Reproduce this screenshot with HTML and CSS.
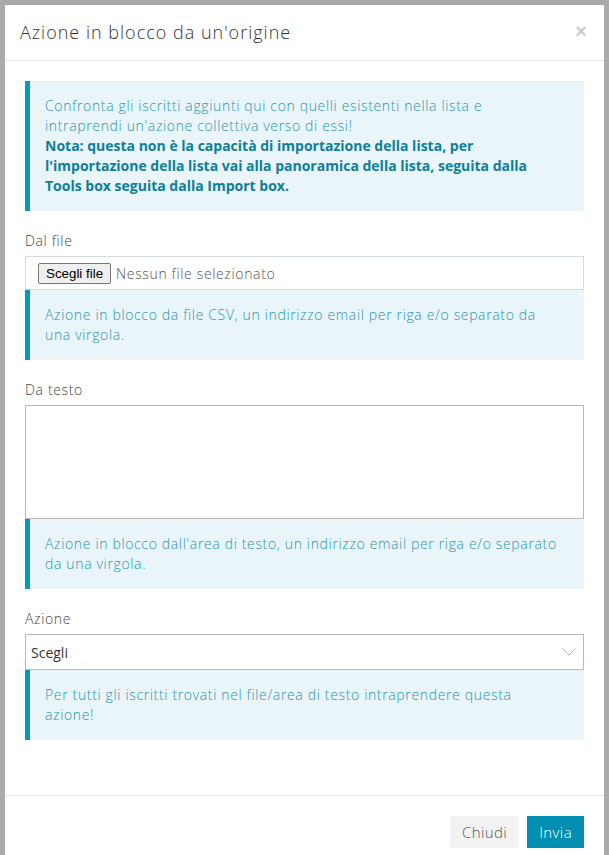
FILE: index.html
```html
<!DOCTYPE html>
<html lang="it">
<head>
    <meta charset="UTF-8">
    <meta name="viewport" content="width=device-width, initial-scale=1.0">
    <title>Azione in blocco da un'origine</title>
    <link rel="stylesheet" href="styles.css">
</head>
<body>
    <div class="modal">
        <div class="modal-header">
            <h4 class="modal-title">Azione in blocco da un'origine</h4>
            <button type="button" class="close">&times;</button>
        </div>

        <div class="modal-body">
            <div class="alert">
                Confronta gli iscritti aggiunti qui con quelli esistenti nella lista e intraprendi un'azione collettiva verso di essi!
                <strong>Nota: questa non è la capacità di importazione della lista, per l'importazione della lista vai alla panoramica della lista, seguita dalla Tools box seguita dalla Import box.</strong>
            </div>

            <div class="form-group">
                <label>Dal file</label>
                <div class="file-input">
                    <span class="file-button">Scegli file</span>
                    <span class="file-name">Nessun file selezionato</span>
                </div>
                <div class="alert">
                    Azione in blocco da file CSV, un indirizzo email per riga e/o separato da una virgola.
                </div>
            </div>

            <div class="form-group">
                <label for="testo">Da testo</label>
                <textarea id="testo"></textarea>
                <div class="alert">
                    Azione in blocco dall'area di testo, un indirizzo email per riga e/o separato da una virgola.
                </div>
            </div>

            <div class="form-group">
                <label for="azione">Azione</label>
                <div class="select-wrap">
                    <select id="azione">
                        <option>Scegli</option>
                    </select>
                    <svg class="chevron" width="14" height="8" viewBox="0 0 14 8">
                        <path d="M0.5 0.5 L7 7 L13.5 0.5" fill="none" stroke="#b5b5b5" stroke-width="1"/>
                    </svg>
                </div>
                <div class="alert">
                    Per tutti gli iscritti trovati nel file/area di testo intraprendere questa azione!
                </div>
            </div>
        </div>

        <div class="modal-footer">
            <button type="button" class="btn btn-default">Chiudi</button>
            <button type="button" class="btn btn-primary">Invia</button>
        </div>
    </div>
</body>
</html>
```

FILE: styles.css
```css
body {
    margin: 0;
    padding: 5px 5px 0 5px;
    background-color: #a8aaab;
    font-family: "Open Sans", sans-serif;
    font-weight: 300;
    font-size: 14px;
    letter-spacing: 0.65px;
    overflow: hidden;
    height: 850px;
}

.modal {
    width: 599px;
    background-color: #ffffff;
    min-height: 900px;
}

.modal-header {
    display: flex;
    justify-content: space-between;
    align-items: flex-start;
    padding: 15px 17px 16px 15px;
    border-bottom: 1px solid #e5e5e5;
}

.modal-title {
    margin: 0;
    font-size: 18px;
    font-weight: 300;
    line-height: 24px;
    letter-spacing: 1px;
    color: #333;
}

.close {
    border: none;
    background: none;
    padding: 0;
    margin-top: 1px;
    font-family: "Liberation Sans", Arial, sans-serif;
    font-size: 20px;
    font-weight: bold;
    line-height: 20px;
    color: #000;
    opacity: 0.2;
}

.modal-body {
    padding: 20px 20px 55px 20px;
}

.alert {
    background-color: #e9f5f8;
    border-left: 5px solid #0797b7;
    padding: 15px 25px 15px 15px;
    line-height: 20px;
    color: #2a95b0;
}

.alert strong {
    display: block;
    font-weight: 700;
    letter-spacing: 0;
    color: #0f7f98;
}

.form-group {
    margin-top: 20px;
}

.form-group label {
    display: block;
    line-height: 20px;
    margin-bottom: 5px;
    color: #444;
}

.file-input {
    display: flex;
    align-items: center;
    height: 32px;
    border: 1px solid #d3dae3;
    padding: 0 12px;
}

.file-button {
    font-family: "Liberation Sans", Arial, sans-serif;
    font-weight: normal;
    font-size: 13.33px;
    letter-spacing: 0;
    color: #000;
    background-color: #efefef;
    border: 1px solid #767676;
    border-radius: 2px;
    padding: 2px 7px;
    margin-right: 5px;
}

.file-name {
    color: #555;
    font-size: 14px;
}

textarea {
    display: block;
    box-sizing: border-box;
    width: 100%;
    height: 114px;
    border: 1px solid #bbb;
    resize: none;
    margin: 0;
}

.select-wrap {
    position: relative;
}

select {
    display: block;
    box-sizing: border-box;
    width: 100%;
    height: 36px;
    padding: 0 5px;
    border: 1px solid #bbb;
    border-radius: 0;
    background-color: #fff;
    appearance: none;
    font-family: "Open Sans", sans-serif;
    font-weight: 400;
    font-size: 14px;
    color: #333;
}

.chevron {
    position: absolute;
    right: 8px;
    top: 14px;
}

.modal-footer {
    display: flex;
    justify-content: flex-end;
    gap: 8px;
    padding: 20px 20px;
    border-top: 1px solid #e5e5e5;
}

.btn {
    height: 32px;
    border: none;
    padding: 0 12px;
    font-family: "Open Sans", sans-serif;
    font-weight: 300;
    font-size: 15px;
    letter-spacing: 0.4px;
}

.btn-default {
    background-color: #f2f2f2;
    color: #555;
}

.btn-primary {
    background-color: #008fb0;
    color: #fff;
}
```
